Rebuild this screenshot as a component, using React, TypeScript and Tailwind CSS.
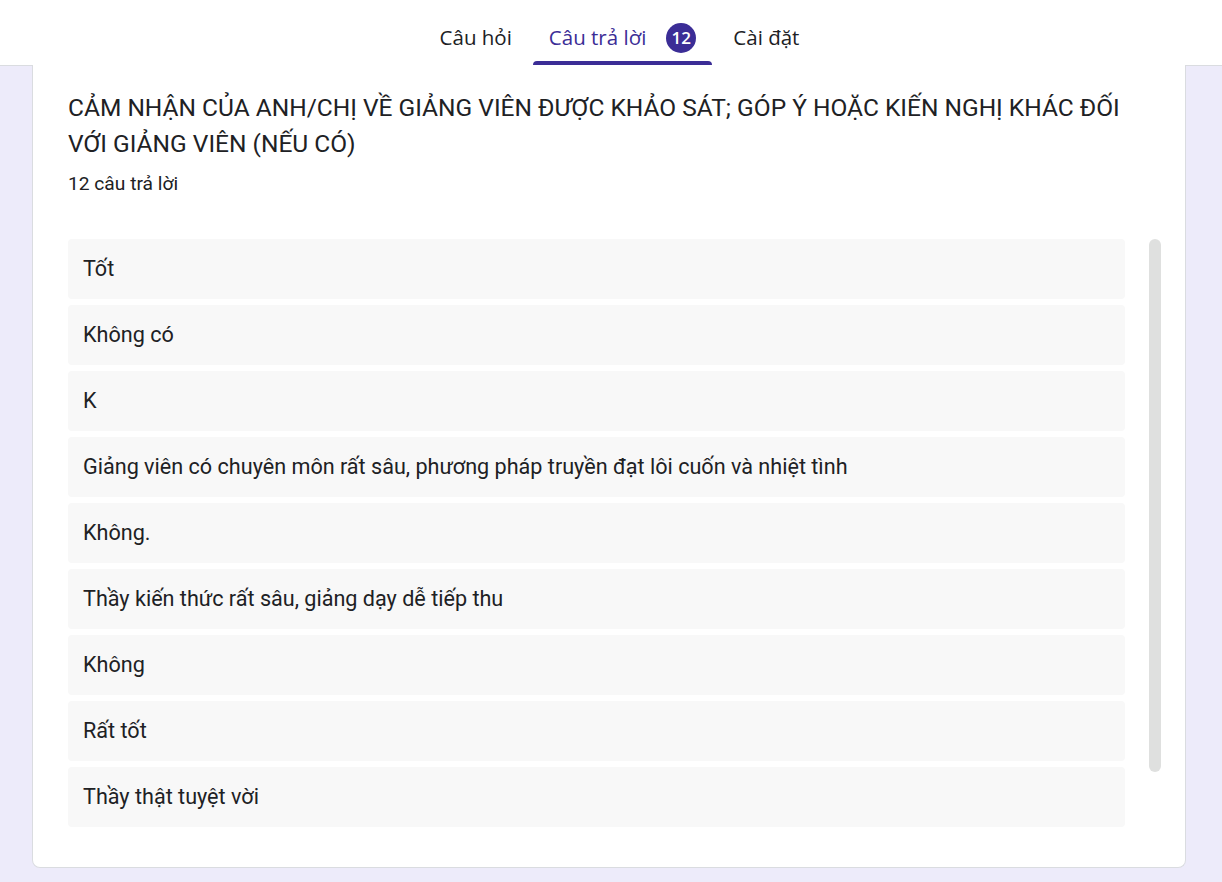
const answers = [
  "Tốt",
  "Không có",
  "K",
  "Giảng viên có chuyên môn rất sâu, phương pháp truyền đạt lôi cuốn và nhiệt tình",
  "Không.",
  "Thầy kiến thức rất sâu, giảng dạy dễ tiếp thu",
  "Không",
  "Rất tốt",
  "Thầy thật tuyệt vời",
];

function Tabs() {
  return (
    <header className="h-[66px] bg-white border-b border-[#dadce0] flex justify-center pl-[17px] font-['Open_Sans',sans-serif]">
      <nav className="flex items-end h-full gap-[5px]">
        <div className="h-full flex items-center px-4 pt-[10px] text-[20.5px] text-[#202124] font-medium">Câu hỏi</div>
        <div className="relative h-full flex items-center px-4 pt-[10px] text-[20.5px] text-[#3b2d96] font-medium gap-[20px]">
          <span>Câu trả lời</span>
          <span className="h-[30px] w-[30px] rounded-full bg-[#3b2d96] text-white text-[17px] font-semibold flex items-center justify-center leading-none">
            12
          </span>
          <span className="absolute left-0 right-0 bottom-0 h-[4px] rounded-t bg-[#3b2d96]" />
        </div>
        <div className="h-full flex items-center px-4 pt-[10px] text-[20.5px] text-[#202124] font-medium">Cài đặt</div>
      </nav>
    </header>
  );
}

export default function App() {
  return (
    <div className="min-h-[882px] bg-[#edebfa] font-['Roboto',sans-serif] text-[#202124]">
      <Tabs />
      <div className="px-[32px] pb-[12px] -mt-px">
        <section className="w-[1154px] bg-white border border-[#dadce0] border-t-0 rounded-b-[8px] pl-[35px] pr-[24px] pt-[25px] pb-[40px]">
          <h2 className="text-[24.5px] leading-[36px]">
            CẢM NHẬN CỦA ANH/CHỊ VỀ GIẢNG VIÊN ĐƯỢC KHẢO SÁT; GÓP Ý HOẶC KIẾN NGHỊ KHÁC ĐỐI VỚI GIẢNG VIÊN (NẾU CÓ)
          </h2>
          <p className="mt-[10px] text-[19.2px] leading-[24px]">12 câu trả lời</p>
          <div className="mt-[43px] flex gap-[24px]">
            <ul className="flex-1 flex flex-col gap-[6px]">
              {answers.map((a) => (
                <li key={a} className="h-[60px] rounded-[4px] bg-[#f8f8f8] px-[15px] flex items-center text-[21.6px]">
                  {a}
                </li>
              ))}
            </ul>
            <div className="w-[12px] h-[533px] rounded-full bg-[#dfe0df]" />
          </div>
        </section>
      </div>
    </div>
  );
}
